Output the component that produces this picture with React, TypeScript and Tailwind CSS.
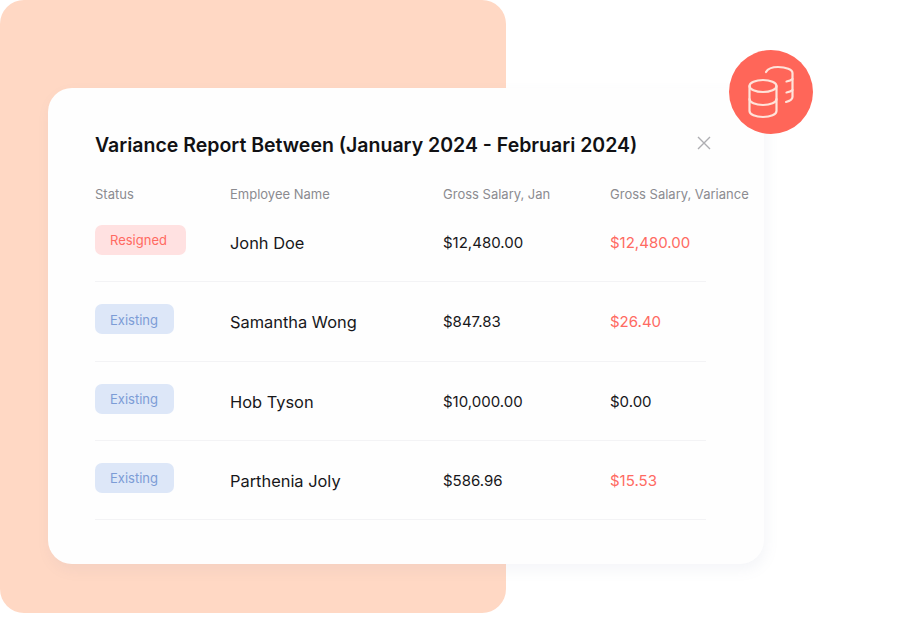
const rows = [
  { status: "Resigned", name: "Jonh Doe", jan: "$12,480.00", variance: "$12,480.00", red: true },
  { status: "Existing", name: "Samantha Wong", jan: "$847.83", variance: "$26.40", red: true },
  { status: "Existing", name: "Hob Tyson", jan: "$10,000.00", variance: "$0.00", red: false },
  { status: "Existing", name: "Parthenia Joly", jan: "$586.96", variance: "$15.53", red: true },
];

const columns = "grid grid-cols-[135px_213px_167px_1fr]";

function Pill({ label }: { label: string }) {
  const resigned = label === "Resigned";
  return (
    <span
      className={
        "flex h-[30px] items-center rounded-[7px] pl-[15px] pt-[2px] text-[13px] " +
        (resigned
          ? "w-[91px] bg-[#ffe1e1] text-[#ff6a62]"
          : "w-[79px] bg-[#dde7f8] text-[#7c9cd6]")
      }
    >
      {label}
    </span>
  );
}

export default function App() {
  return (
    <div className="relative h-[620px] w-[920px] overflow-hidden bg-white font-['Inter','Liberation_Sans',sans-serif]">
      <div className="h-[613px] w-[506px] rounded-[24px] bg-[#ffd8c4]" />

      <div className="absolute left-[48px] top-[88px] h-[476px] w-[716px] rounded-[24px] bg-[#fefefe] pl-[47px] pt-[43px] shadow-[2px_6px_14px_rgba(120,130,170,0.08)]">
        <div className="flex h-[28px] w-[616px] items-center justify-between">
          <h1 className="text-[19.5px] font-semibold leading-[28px] text-[#111114]">
            Variance Report Between (January 2024 - Februari 2024)
          </h1>
          <svg width="14" height="14" viewBox="0 0 14 14" fill="none" className="mb-[5px] shrink-0">
            <path d="M1 1L13 13M13 1L1 13" stroke="#aeaeb2" strokeWidth="1.4" />
          </svg>
        </div>

        <div className={columns + " mt-[26px] h-[18px] items-center text-[13px] text-[#8b8b90]"}>
          <span>Status</span>
          <span>Employee Name</span>
          <span>Gross Salary, Jan</span>
          <span className="whitespace-nowrap">Gross Salary, Variance</span>
        </div>

        <div>
          {rows.map((r) => (
            <div
              key={r.name}
              className={columns + " h-[79.33px] w-[611px] items-start border-b border-[#f3f3f5] pt-[22px] text-[#17171a]"}
            >
              <Pill label={r.status} />
              <span className="mt-[3px] text-[16.4px] leading-[30px]">{r.name}</span>
              <span className="mt-[3px] text-[15px] leading-[30px]">{r.jan}</span>
              <span className={"mt-[3px] text-[15px] leading-[30px] " + (r.red ? "text-[#ff6a62]" : "")}>{r.variance}</span>
            </div>
          ))}
        </div>
      </div>

      <div className="absolute left-[729px] top-[50px] h-[84px] w-[84px] rounded-full bg-[#ff6659]">
        <svg width="84" height="84" viewBox="0 0 84 84" fill="none" stroke="#ffe3da" strokeWidth="2.2" strokeLinecap="round">
          <ellipse cx="34" cy="36" rx="13.5" ry="6" />
          <path d="M20.5 36V61C20.5 64.5 26.5 67 34 67C41.5 67 47.5 64.5 47.5 61V36" />
          <path d="M20.5 49C20.5 52.5 26.5 55 34 55C41.5 55 47.5 52.5 47.5 49" />
          <path d="M37 22C39 18.5 44 17 49 17C57 17 63.5 19.5 63.5 23V47C63.5 49.5 60.5 51 57 52" />
          <path d="M63.5 29C62.5 30 60.5 31 57.5 31.5" />
          <path d="M63.5 40C62.5 41 60.5 42 57.5 42.5" />
        </svg>
      </div>
    </div>
  );
}
